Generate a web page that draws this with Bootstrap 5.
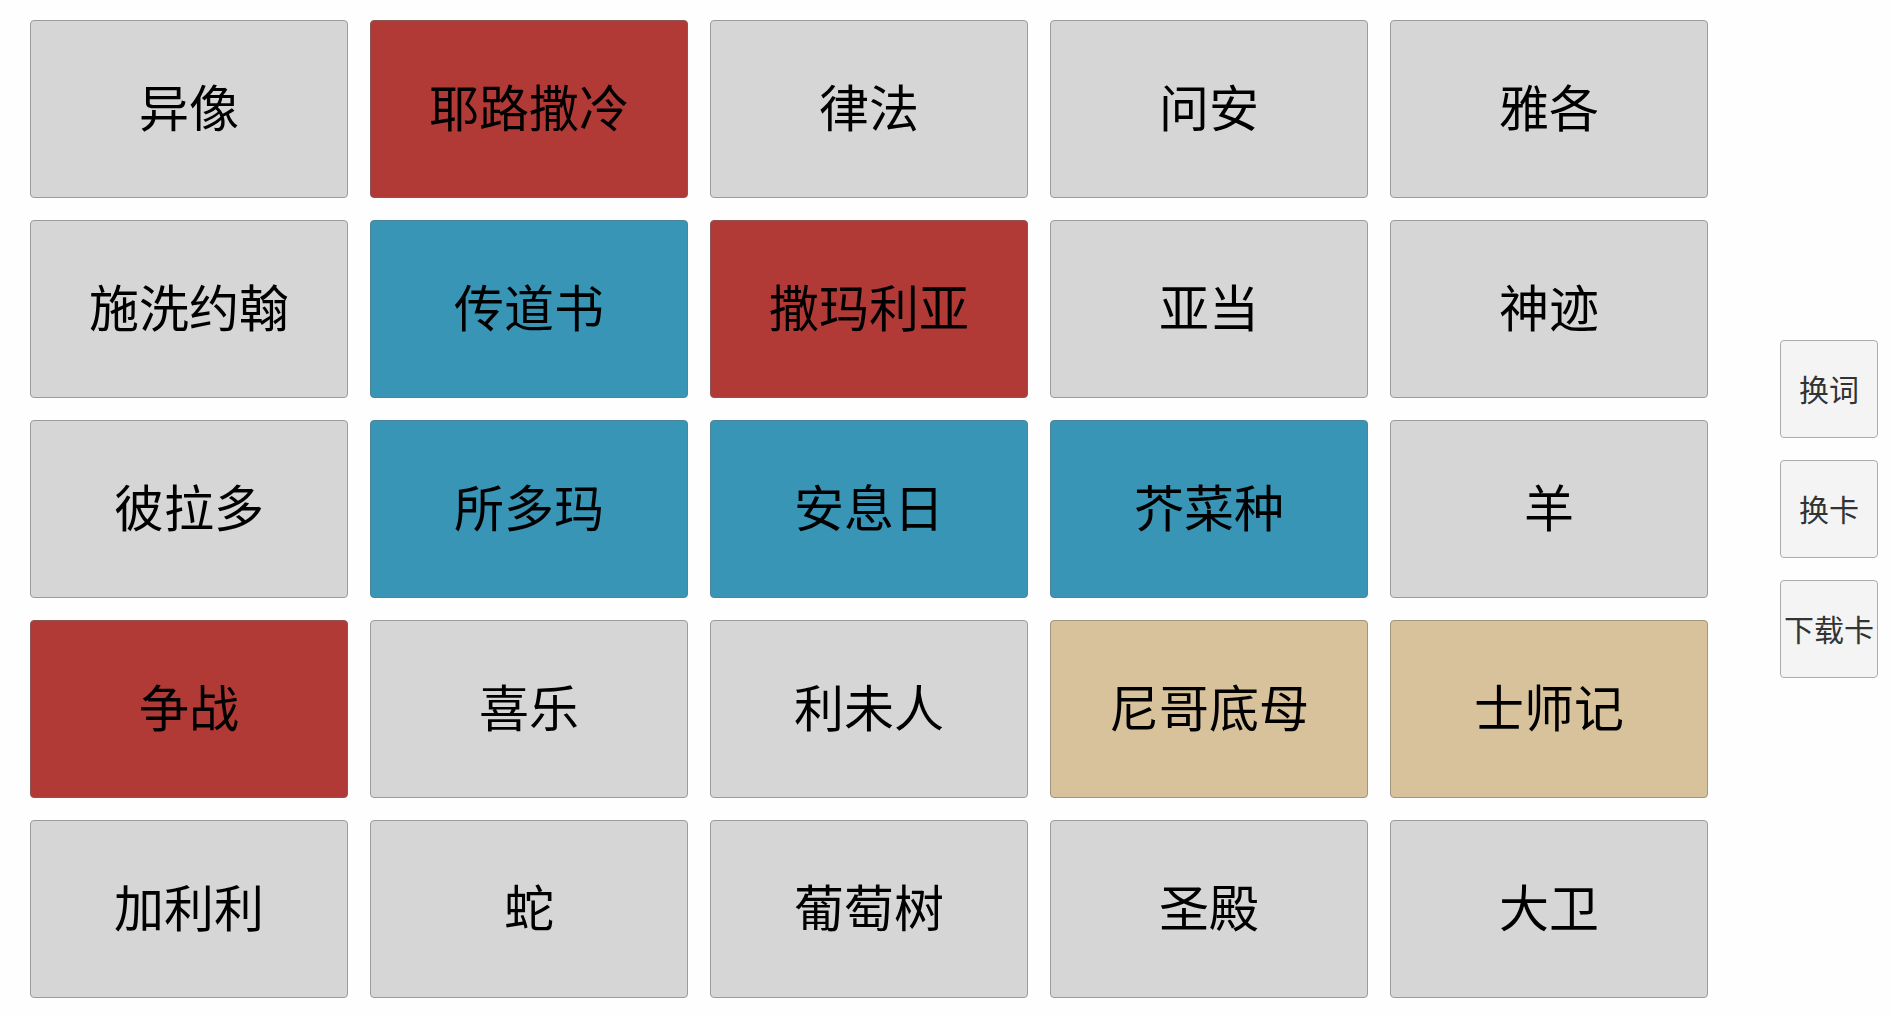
<!DOCTYPE html>
<html lang="zh-CN">
<head>
<meta charset="utf-8">
<meta name="viewport" content="width=device-width, initial-scale=1">
<title>词语卡</title>
<link href="https://cdn.jsdelivr.net/npm/bootstrap@5.3.0/dist/css/bootstrap.min.css" rel="stylesheet">
<style>
  body {
    font-family: "Noto Sans CJK SC", sans-serif;
    background: #fefefe;
  }
  .game-page {
    gap: 72px;
    padding: 20px 13px 17px 30px;
  }
  .word-board {
    display: grid;
    grid-template-columns: repeat(5, minmax(0, 1fr));
    grid-auto-rows: minmax(120px, 1fr);
    gap: 22px;
  }
  .btn.word-tile, .btn.tool-key {
    padding: 0 0 2px;
    border: 1px solid #9c9c9c;
    border-radius: 4px;
    white-space: nowrap;
  }
  .btn.word-tile {
    padding-bottom: 8px;
    font-size: 50px;
    line-height: 60px;
    color: #000;
    background: #d6d6d6;
  }
  .btn.team-red { background: #b23a36; border-color: #8c5452; }
  .btn.team-blue { background: #3895b6; border-color: #4c8499; }
  .btn.bystander { background: #d7c29c; border-color: #a0967f; }
  .tool-column { gap: 22px; }
  .btn.tool-key {
    width: 98px;
    height: 98px;
    font-size: 30px;
    line-height: 36px;
    color: #333;
    background: #f4f4f4;
    border-color: #acacac;
  }
</style>
</head>
<body>
<div class="game-page d-flex align-items-stretch min-vh-100">
  <main class="word-board flex-grow-1">
    <button type="button" class="btn word-tile">异像</button>
    <button type="button" class="btn word-tile team-red">耶路撒冷</button>
    <button type="button" class="btn word-tile">律法</button>
    <button type="button" class="btn word-tile">问安</button>
    <button type="button" class="btn word-tile">雅各</button>

    <button type="button" class="btn word-tile">施洗约翰</button>
    <button type="button" class="btn word-tile team-blue">传道书</button>
    <button type="button" class="btn word-tile team-red">撒玛利亚</button>
    <button type="button" class="btn word-tile">亚当</button>
    <button type="button" class="btn word-tile">神迹</button>

    <button type="button" class="btn word-tile">彼拉多</button>
    <button type="button" class="btn word-tile team-blue">所多玛</button>
    <button type="button" class="btn word-tile team-blue">安息日</button>
    <button type="button" class="btn word-tile team-blue">芥菜种</button>
    <button type="button" class="btn word-tile">羊</button>

    <button type="button" class="btn word-tile team-red">争战</button>
    <button type="button" class="btn word-tile">喜乐</button>
    <button type="button" class="btn word-tile">利未人</button>
    <button type="button" class="btn word-tile bystander">尼哥底母</button>
    <button type="button" class="btn word-tile bystander">士师记</button>

    <button type="button" class="btn word-tile">加利利</button>
    <button type="button" class="btn word-tile">蛇</button>
    <button type="button" class="btn word-tile">葡萄树</button>
    <button type="button" class="btn word-tile">圣殿</button>
    <button type="button" class="btn word-tile">大卫</button>
  </main>
  <aside class="tool-column d-flex flex-column justify-content-center flex-shrink-0">
    <button type="button" class="btn tool-key">换词</button>
    <button type="button" class="btn tool-key">换卡</button>
    <button type="button" class="btn tool-key">下载卡</button>
  </aside>
</div>
<script src="https://cdn.jsdelivr.net/npm/bootstrap@5.3.0/dist/js/bootstrap.bundle.min.js"></script>
</body>
</html>
